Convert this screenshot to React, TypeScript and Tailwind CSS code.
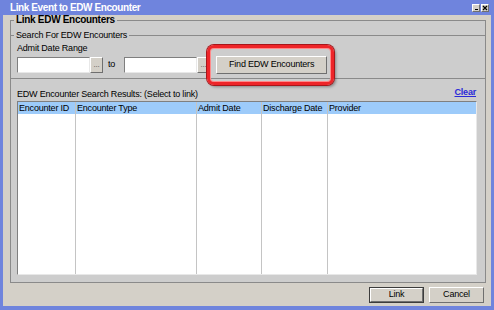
const raised =
  "bg-[#d4d0c8] border border-t-white border-l-white border-r-[#6f6f6f] border-b-[#6f6f6f]";
const sunken =
  "bg-white border border-t-[#7f7f7f] border-l-[#7f7f7f] border-r-[#e8e8e8] border-b-[#e8e8e8]";

const DateField = () => (
  <div className="flex items-center">
    <div className={`w-[73px] h-[16px] ${sunken}`} />
    <button className={`w-[13px] h-[16px] ${raised} flex items-center justify-center text-[8px] leading-none text-[#555] pb-[1px]`}>
      ...
    </button>
  </div>
);

const columns = [
  { label: "Encounter ID", w: "w-[58px]" },
  { label: "Encounter Type", w: "w-[121px]" },
  { label: "Admit Date", w: "w-[65px]" },
  { label: "Discharge Date", w: "w-[66px]" },
  { label: "Provider", w: "flex-1" },
];

const App = () => {
  return (
    <div className="w-[494px] h-[310px] bg-[#6f84dd] flex flex-col px-[3px] pb-[4px] font-['Liberation_Sans',Arial,sans-serif] text-[9px] tracking-[-0.2px] text-black overflow-hidden">
      {/* Title bar */}
      <div className="h-[15px] -mx-[3px] flex items-center justify-between pl-[10px] pr-[5px]">
        <span className="text-white font-bold text-[10px] tracking-[-0.4px] leading-none">
          Link Event to EDW Encounter
        </span>
        <div className="flex gap-[1px] mt-[1px]">
          <div className={`w-[8px] h-[8px] ${raised} flex items-end justify-center pb-[1px]`}>
            <div className="w-[3px] h-[1px] bg-black" />
          </div>
          <div className={`w-[8px] h-[8px] ${raised} flex items-center justify-center`}>
            <svg width="6" height="6" viewBox="0 0 6 6">
              <path d="M1 1L5 5M5 1L1 5" stroke="#000" strokeWidth="1.2" />
            </svg>
          </div>
        </div>
      </div>

      {/* Body */}
      <div className="flex-1 bg-[#d4d0c8] flex flex-col">
        <fieldset className="ml-[7px] mr-[5px] border border-[#8a8a8a] bg-[#cdcdcd] pb-[7px]">
          <legend className="ml-[3px] px-[2px] font-bold text-[10px] tracking-[-0.3px] leading-[10px]">
            Link EDW Encounters
          </legend>

          {/* Search */}
          <fieldset className="mt-[4px] border-t border-b border-[#8a8a8a] pb-[4px]">
            <legend className="ml-[3px] px-[2px] leading-[12px]">Search For EDW Encounters</legend>
            <div className="mt-[2px] pl-[6px] leading-[11px]">Admit Date Range</div>
            <div className="mt-[2px] pl-[6px] h-[18px] flex items-center">
              <DateField />
              <span className="ml-[5px] mr-[9px]">to</span>
              <DateField />
              <div className="relative ml-[6px]">
                <span className="absolute -left-[9px] -top-[11px] w-[127px] h-[40px] rounded-[7px] border-[3px] border-[#ee2529] shadow-[0_0_0_1px_#a8161a,inset_0_0_0_1px_#ff8a8a,2px_2px_3px_rgba(0,0,0,0.35)] pointer-events-none" />
                <button className={`w-[111px] h-[18px] ${raised} flex items-center justify-center`}>
                  Find EDW Encounters
                </button>
              </div>
            </div>
          </fieldset>

          {/* Results */}
          <div className="mt-[8px] h-[13px] flex justify-between pl-[6px] pr-[9px]">
            <span className="self-end leading-[11px]">EDW Encounter Search Results: (Select to link)</span>
            <a href="#" className="self-start leading-[11px] font-bold text-[#2a2ad8] underline">
              Clear
            </a>
          </div>

          <div className={`mt-[1px] ml-[6px] mr-[8px] h-[174px] ${sunken} flex`}>
            {columns.map((c, i) => (
              <div
                key={c.label}
                className={`${c.w} flex flex-col ${i < columns.length - 1 ? "border-r border-[#c4c4c4]" : ""}`}
              >
                <div className="h-[13px] bg-[#9dcbfa] border-b border-white pl-[1px] leading-[12px] whitespace-nowrap overflow-hidden">
                  {c.label}
                </div>
                <div className="flex-1 bg-white" />
              </div>
            ))}
          </div>
        </fieldset>

        {/* Buttons */}
        <div className="mt-[4px] mr-[7px] flex justify-end gap-[5px]">
          <button className="w-[55px] h-[16px] border border-[#3c3c3c] bg-[#d4d0c8] flex">
            <span className={`flex-1 ${raised} flex items-center justify-center`}>Link</span>
          </button>
          <button className={`w-[55px] h-[16px] ${raised} flex items-center justify-center`}>Cancel</button>
        </div>
      </div>
    </div>
  );
};

export default App;
